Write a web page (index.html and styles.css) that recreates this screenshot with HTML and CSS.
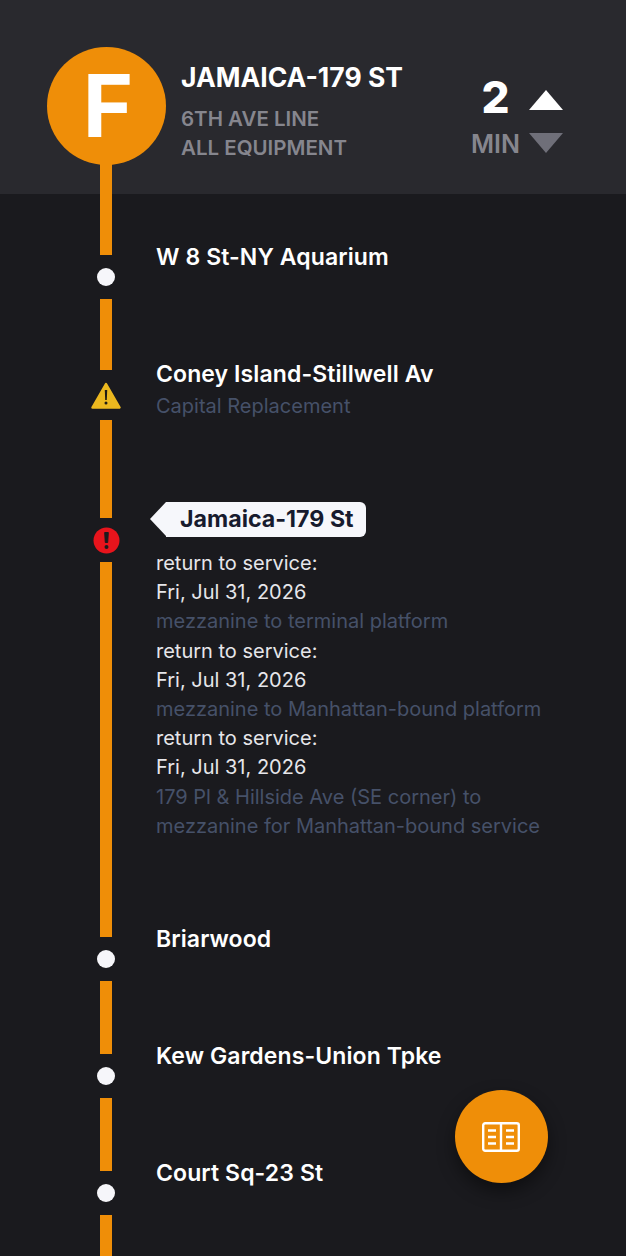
FILE: index.html
```html
<!DOCTYPE html>
<html>
<head>
    <title>Jamaica-179 St</title>
    <link rel="stylesheet" href="styles.css">
</head>
<body>
    <header class="header">
        <div class="bullet">F</div>
        <div class="route-info">
            <h1 class="route-name">JAMAICA-179 ST</h1>
            <p class="route-meta">6TH AVE LINE</p>
            <p class="route-meta">ALL EQUIPMENT</p>
        </div>
        <div class="sort">
            <div class="sort-col">
                <span class="sort-value">2</span>
                <span class="sort-unit">MIN</span>
            </div>
            <div class="sort-arrows">
                <span class="arrow-up"></span>
                <span class="arrow-down"></span>
            </div>
        </div>
    </header>

    <main class="stops">
        <section class="stop stop-first">
            <div class="rail">
                <div class="seg-top"></div>
                <div class="marker"><span class="dot"></span></div>
                <div class="seg-bottom"></div>
            </div>
            <div class="stop-body">
                <h2 class="stop-name">W 8 St-NY Aquarium</h2>
            </div>
        </section>

        <section class="stop stop-warn">
            <div class="rail">
                <div class="seg-top"></div>
                <div class="marker marker-warn">
                    <svg width="30" height="27" viewBox="0 0 30 27">
                        <path d="M15 2 L28.500 25.500 H1.500 Z" fill="#ecb81f" stroke="#ecb81f" stroke-width="2.500" stroke-linejoin="round"/>
                        <path d="M13.800 8 H16.200 L15.800 18 H14.200 Z" fill="#1e1b14"/>
                        <circle cx="15" cy="21" r="1.500" fill="#1e1b14"/>
                    </svg>
                </div>
                <div class="seg-bottom"></div>
            </div>
            <div class="stop-body">
                <h2 class="stop-name">Coney Island-Stillwell Av</h2>
                <p class="stop-note note-first">Capital Replacement</p>
            </div>
        </section>

        <section class="stop stop-current">
            <div class="rail">
                <div class="seg-top"></div>
                <div class="marker">
                    <svg width="27" height="27" viewBox="0 0 27 27">
                        <circle cx="13.500" cy="13.500" r="13" fill="#e8141c"/>
                        <path d="M11.700 5.500 H15.300 L14.700 15.500 H12.300 Z" fill="#1c1a1e" stroke="#1c1a1e" stroke-linejoin="round"/>
                        <circle cx="13.500" cy="20" r="2" fill="#1c1a1e"/>
                    </svg>
                </div>
                <div class="seg-bottom"></div>
            </div>
            <div class="stop-body">
                <h2 class="stop-tag">Jamaica-179 St</h2>
                <div class="outages">
                    <p class="stop-detail">return to service:</p>
                    <p class="stop-detail">Fri, Jul 31, 2026</p>
                    <p class="stop-note">mezzanine to terminal platform</p>
                    <p class="stop-detail">return to service:</p>
                    <p class="stop-detail">Fri, Jul 31, 2026</p>
                    <p class="stop-note">mezzanine to Manhattan-bound platform</p>
                    <p class="stop-detail">return to service:</p>
                    <p class="stop-detail">Fri, Jul 31, 2026</p>
                    <p class="stop-note">179 Pl &amp; Hillside Ave (SE corner) to<br>mezzanine for Manhattan-bound service</p>
                </div>
            </div>
        </section>

        <section class="stop">
            <div class="rail">
                <div class="seg-top"></div>
                <div class="marker"><span class="dot"></span></div>
                <div class="seg-bottom"></div>
            </div>
            <div class="stop-body">
                <h2 class="stop-name">Briarwood</h2>
            </div>
        </section>

        <section class="stop">
            <div class="rail">
                <div class="seg-top"></div>
                <div class="marker"><span class="dot"></span></div>
                <div class="seg-bottom"></div>
            </div>
            <div class="stop-body">
                <h2 class="stop-name">Kew Gardens-Union Tpke</h2>
            </div>
        </section>

        <section class="stop">
            <div class="rail">
                <div class="seg-top"></div>
                <div class="marker"><span class="dot"></span></div>
                <div class="seg-bottom"></div>
            </div>
            <div class="stop-body">
                <h2 class="stop-name">Court Sq-23 St</h2>
            </div>
        </section>
    </main>

    <button class="fab" aria-label="Guide">
        <svg class="fab-icon" width="38" height="30" viewBox="0 0 38 30" fill="none" stroke="#fff" stroke-width="2.400">
            <rect x="1.200" y="1.200" width="35.600" height="27.600" rx="2"/>
            <path d="M19 1.200 V28.800"/>
            <path d="M6 8.500 H14 M6 15 H14 M6 21.500 H14 M24 8.500 H32 M24 15 H32 M24 21.500 H32"/>
        </svg>
    </button>
</body>
</html>
```

FILE: styles.css
```css
html, body {
    height: 100%;
}

body {
    margin: 0;
    font-family: 'Inter', sans-serif;
    background: #1a1a1e;
    color: #fff;
    display: flex;
    flex-direction: column;
    min-height: 100vh;
    overflow: hidden;
}

h1, h2, p {
    margin: 0;
}

.header {
    display: flex;
    height: 194px;
    box-sizing: border-box;
    padding: 47px 63px 0 47px;
    background: #29292e;
}

.bullet {
    position: relative;
    flex: none;
    width: 119px;
    height: 118px;
    border-radius: 50%;
    background: #ef8e08;
    font-size: 86px;
    font-weight: 700;
    line-height: 118px;
    text-align: center;
    text-indent: 3px;
}

/* line running from the bullet into the stop list */
.bullet::after {
    content: "";
    position: absolute;
    top: 116px;
    left: 53px;
    width: 12px;
    height: 31px;
    background: #ef8e08;
}

.route-info {
    flex: 1;
    padding: 15px 0 0 15px;
}

.route-name {
    font-size: 26.5px;
    font-weight: 700;
    line-height: 30px;
}

.route-meta {
    font-size: 20.5px;
    font-weight: 600;
    line-height: 29px;
    color: #86868e;
}

.route-name + .route-meta {
    margin-top: 12px;
}

.sort {
    display: flex;
    gap: 9px;
    padding-top: 26px;
}

.sort-col {
    display: flex;
    flex-direction: column;
    align-items: center;
}

.sort-value {
    font-size: 44px;
    font-weight: 800;
    line-height: 48px;
}

.sort-unit {
    font-size: 25px;
    font-weight: 600;
    line-height: 30px;
    margin-top: 8px;
    color: #86868e;
}

.sort-arrows {
    display: flex;
    flex-direction: column;
    gap: 23px;
    padding-top: 17px;
}

.arrow-up,
.arrow-down {
    display: block;
    width: 0;
    height: 0;
    border-left: 17px solid transparent;
    border-right: 17px solid transparent;
}

.arrow-up {
    border-bottom: 20px solid #fff;
}

.arrow-down {
    border-top: 20px solid #6f6f79;
}

.stops {
    flex: 1;
    display: flex;
    flex-direction: column;
}

.stop {
    display: grid;
    grid-template-columns: 52px 1fr;
    gap: 24px;
    padding-left: 80px;
    min-height: 117px;
}

.stop:last-child {
    flex: 1;
}

.stop-first {
    min-height: 140px;
}

.stop-warn {
    min-height: 148px;
}

.rail {
    display: flex;
    flex-direction: column;
    align-items: center;
}

.seg-top,
.seg-bottom {
    width: 12px;
    background: #ef8e08;
}

.seg-top {
    height: 36px;
}

.stop-first .seg-top {
    height: 61px;
}

.seg-bottom {
    flex: 1;
}

.marker {
    display: flex;
    align-items: center;
    justify-content: center;
    height: 44px;
}

.marker-warn {
    height: 50px;
}

.dot {
    width: 18px;
    height: 18px;
    border-radius: 50%;
    background: #f6f6fa;
}

.stop-body {
    padding-top: 24px;
}

.stop-first .stop-body {
    padding-top: 49px;
}

.stop-warn .stop-body {
    padding-top: 26px;
}

.stop-name {
    font-size: 23px;
    font-weight: 600;
    letter-spacing: 0.1px;
    line-height: 28px;
}

.stop-tag {
    position: relative;
    width: 200px;
    height: 35px;
    box-sizing: border-box;
    margin: -4px 0 0 10px;
    padding-left: 14px;
    border-radius: 0 6px 6px 0;
    background: #f6f7fb;
    color: #171b2e;
    font-size: 23.2px;
    font-weight: 700;
    line-height: 35px;
}

.stop-tag::before {
    content: "";
    position: absolute;
    top: 0;
    left: -16px;
    border-top: 17.5px solid transparent;
    border-bottom: 17.5px solid transparent;
    border-right: 16px solid #f6f7fb;
}

.outages {
    margin-top: 12px;
    padding-bottom: 60px;
}

.stop-detail,
.stop-note {
    font-size: 20px;
    line-height: 29.2px;
}

.stop-detail {
    color: #e6e6ea;
}

.stop-note {
    color: #465169;
}

.note-first {
    margin-top: 4px;
}

.fab {
    position: fixed;
    top: 1090px;
    left: 455px;
    display: flex;
    align-items: center;
    justify-content: center;
    width: 93px;
    height: 93px;
    padding: 0;
    border: 0;
    border-radius: 50%;
    background: #ef8e08;
    box-shadow: 0 8px 18px rgba(0, 0, 0, 0.45);
}

.fab-icon {
    margin-right: 2px;
}
```
